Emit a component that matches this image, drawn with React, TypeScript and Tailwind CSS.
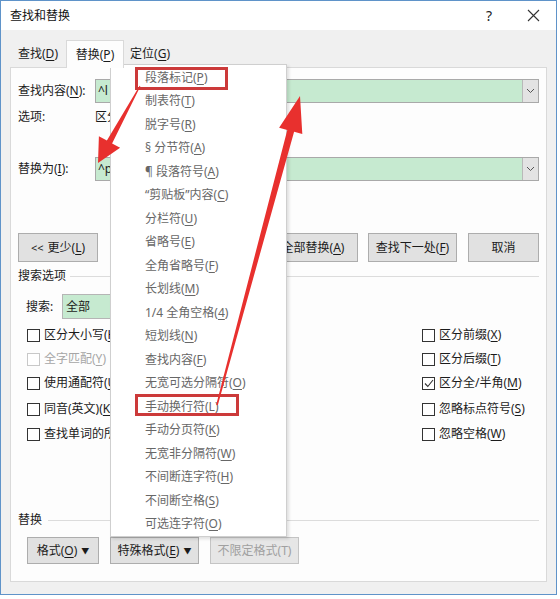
import React from "react";

function M({ s }: { s: string }) {
  const i = s.indexOf("&");
  if (i < 0) return <>{s}</>;
  return (
    <>
      {s.slice(0, i)}
      <span className="underline underline-offset-2">{s[i + 1]}</span>
      {s.slice(i + 2)}
    </>
  );
}

function Combo({ text }: { text: string }) {
  return (
    <div className="flex-1 h-full flex border border-[#a9a9a9] bg-[#c6ead0]">
      <div className="flex-1 flex items-center pl-[2px] text-[#222]">{text}</div>
      <div className="w-[16px] h-full bg-[#e3e3e3] border-l border-[#b9b9b9] flex items-center justify-center">
        <svg width="9" height="6" viewBox="0 0 9 6">
          <path d="M1 1 L4.5 4.5 L8 1" fill="none" stroke="#555" strokeWidth="1" />
        </svg>
      </div>
    </div>
  );
}

function Btn({ children, w, cls = "" }: { children: React.ReactNode; w: string; cls?: string }) {
  return (
    <div className={`${w} h-full flex items-center justify-center bg-[#e1e1e1] border border-[#adadad] ${cls}`}>
      {children}
    </div>
  );
}

function Check({ label, checked = false, disabled = false }: { label: string; checked?: boolean; disabled?: boolean }) {
  return (
    <div className="flex items-center">
      <div
        className={`w-[13px] h-[13px] mr-[4px] bg-white border flex items-center justify-center ${
          disabled ? "border-[#c8c8c8]" : "border-[#333333]"
        }`}
      >
        {checked && (
          <svg width="10" height="9" viewBox="0 0 10 9">
            <path d="M1 4.5 L3.8 7.5 L9 1" fill="none" stroke="#333" strokeWidth="1.1" />
          </svg>
        )}
      </div>
      <span className={disabled ? "text-[#a6a6a6]" : "text-[#1b1b1b]"}>
        <M s={label} />
      </span>
    </div>
  );
}

const menuItems = [
  "段落标记(&P)",
  "制表符(&T)",
  "脱字号(&R)",
  "§ 分节符(&A)",
  "¶ 段落符号(&A)",
  "“剪贴板”内容(&C)",
  "分栏符(&U)",
  "省略号(&E)",
  "全角省略号(&F)",
  "长划线(&M)",
  "1/4 全角空格(&4)",
  "短划线(&N)",
  "查找内容(&F)",
  "无宽可选分隔符(&O)",
  "手动换行符(&L)",
  "手动分页符(&K)",
  "无宽非分隔符(&W)",
  "不间断连字符(&H)",
  "不间断空格(&S)",
  "可选连字符(&O)",
];

const leftChecks: [string, boolean, boolean, string][] = [
  ["区分大小写(&H)", false, false, "mt-[7px]"],
  ["全字匹配(&Y)", false, true, "mt-[6px]"],
  ["使用通配符(&U)", false, false, "mt-[6px]"],
  ["同音(英文)(&K)", false, false, "mt-[8px]"],
  ["查找单词的所有形式(英文)(&W)", false, false, "mt-[7px]"],
];
const rightChecks: [string, boolean][] = [
  ["区分前缀(&X)", false],
  ["区分后缀(&T)", false],
  ["区分全/半角(&M)", true],
  ["忽略标点符号(&S)", false],
  ["忽略空格(&W)", false],
];

export default function App() {
  return (
    <div className="relative w-[560px] h-[599px] bg-white overflow-hidden text-[12px] text-[#1b1b1b] font-['Noto_Sans','Noto_Sans_CJK_SC',sans-serif] leading-none">
      <div className="w-[557px] h-[595px] border border-[#5f93c9] bg-[#f0f0f0] flex flex-col">
        {/* title bar */}
        <div className="h-[29px] bg-white flex items-center pl-[9px] pr-[13px]">
          <span className="text-[12px] text-[#111]">查找和替换</span>
          <div className="ml-auto w-[20px] flex justify-center text-[14px] text-[#222]">?</div>
          <div className="ml-[24px] w-[20px] flex justify-center">
            <svg width="13" height="13" viewBox="0 0 13 13">
              <path d="M1 1 L12 12 M12 1 L1 12" stroke="#333" strokeWidth="1.1" />
            </svg>
          </div>
        </div>
        {/* tabs */}
        <div className="h-[37px] flex items-end pl-[9px]">
          <div className="w-[56px] h-[27px] flex items-center justify-center">
            <M s="查找(&D)" />
          </div>
          <div className="relative z-10 -mb-px w-[58px] h-[28px] flex items-center justify-center bg-[#fdfdfd] border border-b-0 border-[#d9d9d9]">
            <M s="替换(&P)" />
          </div>
          <div className="w-[52px] h-[27px] flex items-center justify-center">
            <M s="定位(&G)" />
          </div>
        </div>
        {/* panel */}
        <div className="ml-[9px] w-[537px] h-[515px] border border-[#d9d9d9] bg-[#fdfdfd] px-[7px] flex flex-col">
          <div className="mt-[11px] h-[24px] flex items-center">
            <div className="w-[77px]">
              <M s="查找内容(&N):" />
            </div>
            <Combo text="^l" />
          </div>
          <div className="mt-[5px] h-[18px] flex items-center">
            <div className="w-[77px]">选项:</div>
            <div>区分全/半角</div>
          </div>
          <div className="mt-[31px] h-[24px] flex items-center">
            <div className="w-[77px]">
              <M s="替换为(&I):" />
            </div>
            <Combo text="^p" />
          </div>
          <div className="mt-[52px] h-[29px] flex">
            <Btn w="w-[80px]">
              <span className="mr-[4px] text-[11px]">&lt;&lt;</span>
              <M s="更少(&L)" />
            </Btn>
            <div className="flex-1" />
            <Btn w="w-[90px]">
              <M s="全部替换(&A)" />
            </Btn>
            <Btn w="w-[89px]" cls="ml-[10px]">
              <M s="查找下一处(&F)" />
            </Btn>
            <Btn w="w-[71px]" cls="ml-[11px]">
              取消
            </Btn>
          </div>
          <div className="mt-[6px] h-[16px] flex items-center">
            <span>搜索选项</span>
            <div className="flex-1 h-px bg-[#dcdcdc] ml-[4px]" />
          </div>
          <div className="mt-[10px] h-[25px] flex items-center pl-[8px]">
            <div className="w-[36px]">
              <M s="搜索:" />
            </div>
            <div className="w-[130px] h-full bg-[#c6ead0] border border-[#b5b5b5] flex items-center pl-[3px]">全部</div>
          </div>
          {leftChecks.map(([l, c, d, mt], i) => (
            <div key={i} className={`${mt} h-[18px] flex items-center`}>
              <div className="w-[404px] pl-[9px]">
                <Check label={l} checked={c} disabled={d} />
              </div>
              <Check label={rightChecks[i][0]} checked={rightChecks[i][1]} />
            </div>
          ))}
          <div className="mt-[69px] h-[16px] flex items-center">
            <span>替换</span>
            <div className="flex-1 h-px bg-[#dcdcdc] ml-[6px]" />
          </div>
          <div className="mt-[9px] h-[27px] flex pl-[9px]">
            <Btn w="w-[72px]">
              <M s="格式(&O)" />
              <span className="ml-[4px] text-[8px]">▼</span>
            </Btn>
            <Btn w="w-[89px]" cls="ml-[11px] border-[#0078d7]">
              <M s="特殊格式(&E)" />
              <span className="ml-[4px] text-[8px]">▼</span>
            </Btn>
            <Btn w="w-[89px]" cls="ml-[11px] text-[#a0a0a0] bg-[#e6e6e6] border-[#c4c4c4]">
              不限定格式(T)
            </Btn>
          </div>
        </div>
      </div>

      {/* dropdown menu */}
      <div className="absolute left-[110px] top-[64px] w-[177px] h-[473px] bg-white border border-[#cfcfcf] shadow-[2px_2px_3px_rgba(0,0,0,0.12)] pt-px">
        {menuItems.map((t, i) => (
          <div key={i} className="h-[23.5px] flex items-center pl-[34px] text-[#676767]">
            <M s={t} />
          </div>
        ))}
      </div>

      {/* red highlight boxes */}
      <div className="absolute left-[135px] top-[67px] w-[93px] h-[23px] border-[3px] border-[#cc3a3a]" />
      <div className="absolute left-[135px] top-[394px] w-[104px] h-[22px] border-[3px] border-[#cc3a3a]" />

      {/* arrows */}
      <svg className="absolute left-0 top-0 pointer-events-none" width="560" height="599" viewBox="0 0 560 599">
        <polygon
          points="139.6,85.8 106.9,140.6 98.9,136.2 98,163 120.1,147.8 112.1,143.4 140.4,86.2"
          fill="#e8302e"
        />
        <polygon
          points="216.2,404.8 287.3,129.9 279.1,127.7 300,96 302.3,133.9 294.1,131.7 217.8,405.2"
          fill="#e8302e"
        />
      </svg>
    </div>
  );
}
